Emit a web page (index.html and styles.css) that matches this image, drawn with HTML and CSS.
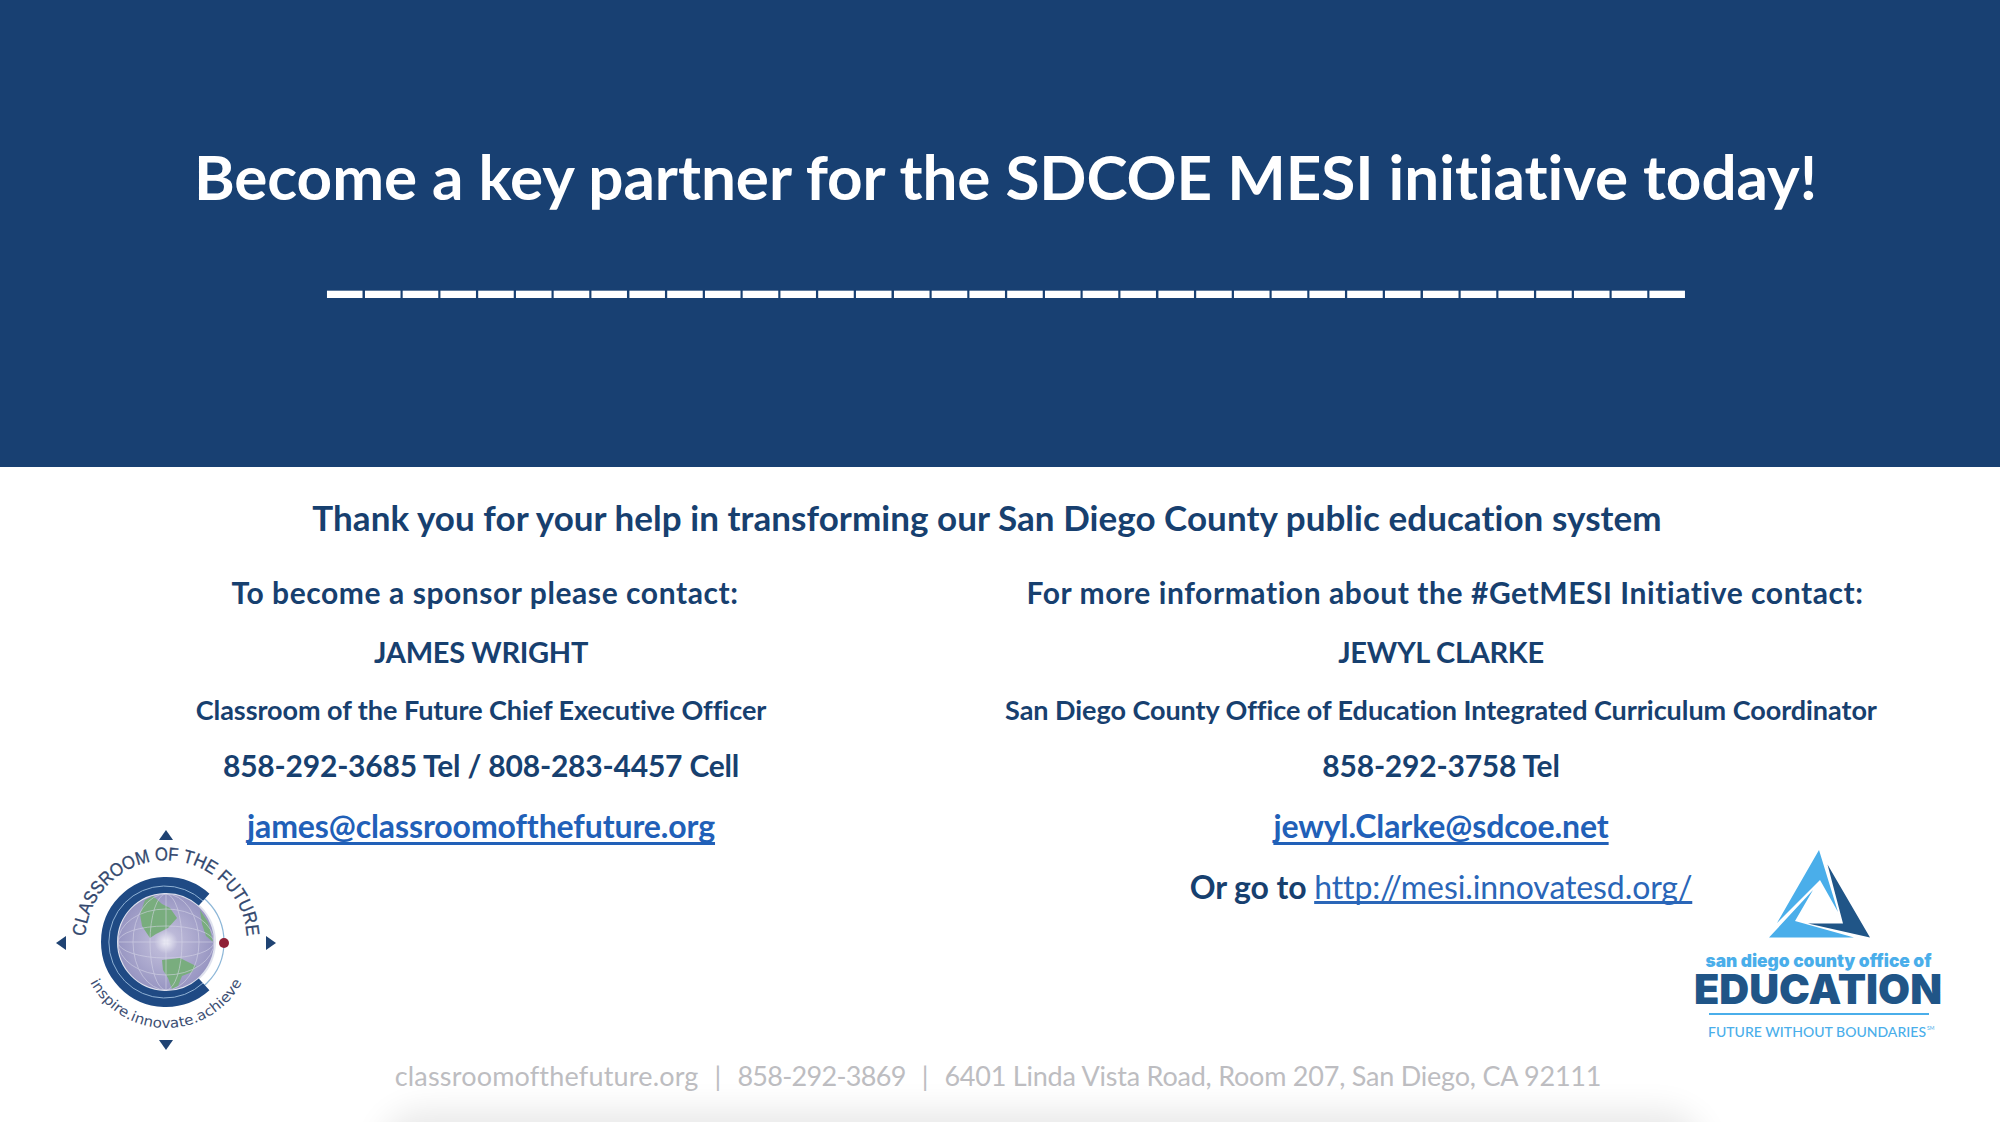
FILE: index.html
```html
<!DOCTYPE html>
<html lang="en">
<head>
<meta charset="utf-8">
<title>Become a key partner</title>
<link rel="stylesheet" href="styles.css">
</head>
<body>
<div class="slide">
  <header class="banner">
    <h1 class="title">Become a key partner for the SDCOE MESI initiative today!</h1>
    <div class="rule">____________________________________</div>
  </header>
  <main class="content">
    <p class="thanks">Thank you for your help in transforming our San Diego County public education system</p>
    <div class="columns">
      <section class="contact contact-left">
        <p class="lead lead-left">To become a sponsor please contact:</p>
        <p class="name">JAMES WRIGHT</p>
        <p class="role">Classroom of the Future Chief Executive Officer</p>
        <p class="phone">858-292-3685 Tel / 808-283-4457 Cell</p>
        <p class="mail"><a class="mail-link" href="#">james@classroomofthefuture.org</a></p>
      </section>
      <section class="contact contact-right">
        <p class="lead lead-right">For more information about the #GetMESI Initiative contact:</p>
        <p class="name">JEWYL CLARKE</p>
        <p class="role">San Diego County Office of Education Integrated Curriculum Coordinator</p>
        <p class="phone">858-292-3758 Tel</p>
        <p class="mail"><a class="mail-link" href="#">jewyl.Clarke@sdcoe.net</a></p>
        <p class="goto">Or go to <a class="url" href="#">http://mesi.innovatesd.org/</a></p>
      </section>
    </div>
  </main>
  <footer class="foot"><span class="foot-site">classroomofthefuture.org</span><span class="foot-sep">|</span><span class="foot-phone">858-292-3869</span><span class="foot-sep">|</span><span class="foot-addr">6401 Linda Vista Road, Room 207, San Diego, CA 92111</span></footer>
  <div class="foot-shadow"></div>

  <svg class="logo logo-cof" viewBox="0 0 270 250" width="270" height="250" aria-label="Classroom of the Future">
    <defs>
      <radialGradient id="globe" cx="50%" cy="50%" r="55%">
        <stop offset="0" stop-color="#f0f0f8"/>
        <stop offset=".22" stop-color="#bcb9d8"/>
        <stop offset="1" stop-color="#9391bf"/>
      </radialGradient>
      <path id="arcTop" d="M 55.700 142 A 81 81 0 1 1 216.300 142"/>
      <path id="arcBottom" d="M 50 132 A 86 86 0 0 0 222 132"/>
    </defs>
    <polygon class="cof-navy" points="136,20 129,30 143,30"/>
    <polygon class="cof-navy" points="136,240 129,230 143,230"/>
    <polygon class="cof-navy" points="26,133 36,126 36,140"/>
    <polygon class="cof-navy" points="246,133 236,126 236,140"/>
    <circle class="cof-thin" cx="136" cy="132" r="58"/>
    <circle cx="136" cy="132" r="50" fill="#dfe2ee"/>
    <circle cx="136" cy="132" r="48" fill="url(#globe)"/>
    <path class="cof-land" d="M115 90 L123 86 L132 94 L140 98 L147 108 L138 118 L126 124 L120 128 L112 116 L110 104 Z"/>
    <path class="cof-land" d="M170 100 L178 112 L183 132 L176 126 L172 114 Z"/>
    <path class="cof-land" d="M132 150 L150 148 L166 156 L162 162 L152 166 L148 176 L142 179 L138 168 L133 160 Z"/>
    <g class="cof-grid">
      <ellipse cx="136" cy="132" rx="16" ry="48"/>
      <ellipse cx="136" cy="132" rx="33" ry="48"/>
      <ellipse cx="136" cy="132" rx="48" ry="16"/>
      <ellipse cx="136" cy="132" rx="48" ry="33"/>
      <path d="M136 84V180M88 132H184"/>
    </g>
    <path class="cof-ring" d="M 174.100 89.600 A 57 57 0 1 0 174.100 174.400"/>
    <path class="cof-ring-line" d="M 173 91 A 56 56 0 1 0 173 173"/>
    <circle cx="194" cy="133" r="5" fill="#8e2137"/>
    <text class="cof-top"><textPath href="#arcTop" startOffset="50%" textLength="244" lengthAdjust="spacingAndGlyphs">CLASSROOM OF THE FUTURE</textPath></text>
    <text class="cof-bottom"><textPath href="#arcBottom" startOffset="50%" textLength="186" lengthAdjust="spacingAndGlyphs">inspire.innovate.achieve</textPath></text>
  </svg>

  <svg class="logo logo-sd" viewBox="0 0 290 220" width="290" height="220" aria-label="San Diego County Office of Education">
    <polygon class="sd-light" points="149,20 107,93 150,50 168,82"/>
    <polygon class="sd-light" points="99,107.5 143,60 125,91 184,107.5"/>
    <polygon class="sd-dark" points="157.500,34.500 200,107.500 138,93.500 173,93.500"/>
    <text class="sd-county" x="35.500" y="137" textLength="226" lengthAdjust="spacingAndGlyphs">san diego county office of</text>
    <text class="sd-edu" x="24" y="173.500" textLength="248" lengthAdjust="spacingAndGlyphs">EDUCATION</text>
    <rect class="sd-light" x="39" y="183" width="220" height="2"/>
    <text class="sd-future" x="38" y="207" textLength="218">FUTURE WITHOUT BOUNDARIES</text>
    <text class="sd-sm" x="257" y="200">SM</text>
  </svg>
</div>
</body>
</html>
```

FILE: styles.css
```css
* { box-sizing: border-box; margin: 0; padding: 0; }
html, body { width: 2000px; height: 1122px; overflow: hidden; background: #fff; }
body { font-family: Lato, "Open Sans", sans-serif; color: #17406f; font-variant-ligatures: none; }
.slide { position: relative; width: 2000px; height: 1122px; overflow: hidden; display: flex; flex-direction: column; }

.banner { height: 467px; flex: none; background: #184072; color: #fff; display: flex; flex-direction: column; align-items: center; padding-top: 136px; }
.title { font-size: 62px; line-height: 80px; font-weight: 700; letter-spacing: -0.05px; white-space: nowrap; margin-left: 11px; }
.rule { font-size: 90px; line-height: 40px; font-weight: 700; letter-spacing: -4.2px; white-space: nowrap; margin-top: 14px; margin-left: 8px; }

.content { flex: none; font-weight: 700; text-align: center; }
.thanks { font-size: 35px; line-height: 44px; margin-top: 28px; letter-spacing: 0.05px; margin-right: 26px; }
.columns { display: grid; grid-template-columns: 962px 958px; margin-top: 23px; }
.lead { font-size: 30px; line-height: 60px; letter-spacing: 0.57px; }
.lead-left { margin-left: 8px; }
.lead-right { margin-left: 8px; }
.name { font-size: 29px; line-height: 59px; letter-spacing: -0.3px; }
.role { font-size: 27px; line-height: 57px; letter-spacing: -0.05px; }
.phone { font-size: 30px; line-height: 55px; letter-spacing: -0.2px; }
.mail { font-size: 32px; line-height: 65px; letter-spacing: -0.1px; }
.mail-link { color: #2160b8; text-decoration: underline; text-decoration-thickness: 3px; text-underline-offset: 4px; text-decoration-skip-ink: none; }
.goto { font-size: 32px; line-height: 57px; letter-spacing: -0.1px; }
.url { color: #2a66b8; font-weight: 400; text-decoration: underline; text-decoration-skip-ink: none; }

.foot { position: absolute; left: 0; width: 2000px; top: 1056px; text-align: center; font-size: 27px; line-height: 40px; color: #bdbdc1; padding-right: 4px; z-index: 2; }
.foot-site { letter-spacing: 0.18px; }
.foot-phone { letter-spacing: -0.7px; }
.foot-addr { letter-spacing: -0.22px; }
.foot-sep { margin: 0 16px; }
.foot-shadow { position: absolute; left: 392px; width: 1300px; top: 1122px; height: 60px; background: #eee; box-shadow: 0 0 32px 12px rgba(0,0,0,.09); border-radius: 40px; }

.logo { position: absolute; display: block; }
.logo-cof { left: 30px; top: 810px; }
.logo-sd { left: 1670px; top: 830px; }

.cof-navy { fill: #1f4373; }
.cof-thin { fill: none; stroke: #8db7d8; stroke-width: 1.2; }
.cof-grid { fill: none; stroke: #d8d8ea; stroke-width: .8; opacity: .7; }
.cof-land { fill: #79ad7e; }
.cof-ring { fill: none; stroke: #1f4a84; stroke-width: 16; }
.cof-ring-line { fill: none; stroke: #8fb1d4; stroke-width: 1; }
.cof-top { font-family: "Liberation Sans Narrow", "Liberation Sans", sans-serif; font-size: 18.5px; fill: #33486e; stroke: #33486e; stroke-width: .3px; text-anchor: middle; }
.cof-bottom { font-family: "DejaVu Sans", sans-serif; font-size: 14px; fill: #3d4f73; text-anchor: middle; }

.sd-light { fill: #4aaeea; }
.sd-dark { fill: #205587; }
.sd-county { font-family: Inter, sans-serif; font-weight: 900; font-size: 18px; fill: #4aaeea; }
.sd-edu { font-family: Inter, sans-serif; font-weight: 900; font-size: 41px; fill: #205587; }
.sd-future { font-family: Lato, sans-serif; font-weight: 500; font-size: 14px; fill: #4aaeea; }
.sd-sm { font-family: Lato, sans-serif; font-size: 5px; fill: #4aaeea; }
```
